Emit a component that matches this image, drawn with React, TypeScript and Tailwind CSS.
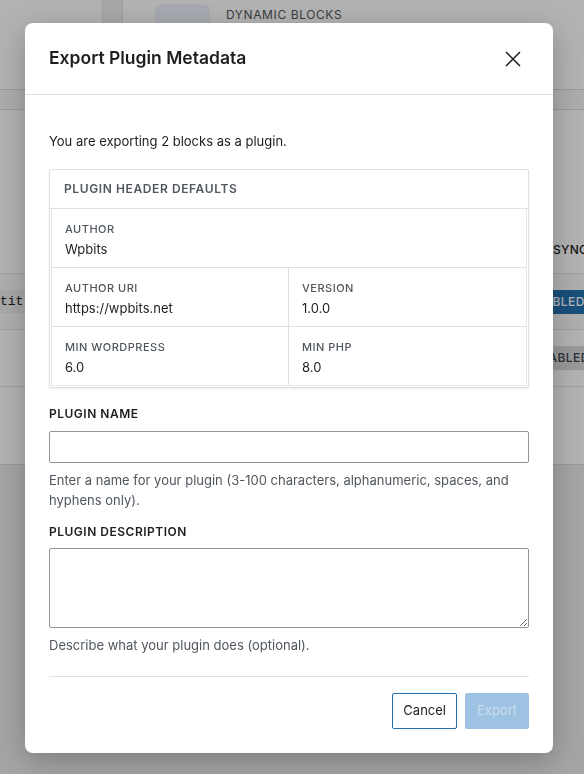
import React from 'react';

const fields = [
  { label: 'Author URI', value: 'https://wpbits.net' },
  { label: 'Version', value: '1.0.0' },
  { label: 'Min WordPress', value: '6.0' },
  { label: 'Min PHP', value: '8.0' },
];

function MetaCell({ label, value, className = '' }: { label: string; value: string; className?: string }) {
  return (
    <div className={`pl-[13px] pr-3.5 pt-3 pb-[8px] ${className}`}>
      <div className="text-[11px] leading-4 font-medium uppercase tracking-[0.5px] text-[#50575e]">{label}</div>
      <div className="mt-0.5 text-[13px] leading-5 text-[#1e1e1e]">{value}</div>
    </div>
  );
}

export default function App() {
  return (
    <div className="relative h-[774px] overflow-hidden bg-white font-['Inter','Noto_Sans',sans-serif]">
      {/* Page behind the modal */}
      <div className="flex h-[89px]">
        <div className="w-[102px]" />
        <div className="w-[21px] bg-[#f0f0f1] border-x border-[#e2e4e7]" />
        <div className="flex flex-1 items-start gap-4 pl-8 pt-[4px]">
          <div className="h-[60px] w-[55px] rounded-lg bg-[#eef2fb]" />
          <div className="pt-[2px] text-[12px] tracking-[0.6px] text-[#50575e]">DYNAMIC BLOCKS</div>
        </div>
      </div>
      <div className="h-[21px] border-y border-[#dcdcde] bg-[#f6f7f7]" />
      <div className="flex h-[163px] items-end justify-end pb-[14px]">
        <div className="w-[31px] overflow-hidden whitespace-nowrap text-[12px] font-medium tracking-[0.3px] text-[#1e1e1e]">SYNC STATUS</div>
      </div>
      <div className="flex h-[57px] items-center justify-between border-y border-[#e2e4e7] bg-[#fafafa]">
        <code className="bg-[#f0f0f1] py-[2px] font-['Liberation_Mono',monospace] text-[13px] text-[#1e1e1e]">title_attr</code>
        <span className="mr-[-9px] rounded-[2px] bg-[#2271b1] px-2 py-[3px] text-[12px] font-medium tracking-[0.5px] text-white">ENABLED</span>
      </div>
      <div className="flex h-[57px] items-center justify-end border-b border-[#e2e4e7]">
        <span className="mr-[-14px] rounded-[2px] bg-[#dcdcde] px-2 py-[3px] text-[12px] font-medium tracking-[0.5px] text-[#3c434a]">DISABLED</span>
      </div>
      <div className="h-[78px] border-b border-[#dcdcde]" />
      <div className="h-full bg-[#ececec]" />

      {/* Overlay + modal */}
      <div className="fixed inset-0 bg-black/30">
        <div className="ml-[25px] mt-[23px] w-[528px] rounded-lg bg-white shadow-[0_8px_30px_rgba(0,0,0,0.25)]">
          <div className="flex h-[72px] items-center justify-between border-b border-[#e0e0e0] px-6">
            <h1 className="text-[17.5px] font-semibold text-[#1e1e1e]">Export Plugin Metadata</h1>
            <button className="mr-2 text-[#1e1e1e]" aria-label="Close">
              <svg width="16" height="16" viewBox="0 0 16 16" fill="none" stroke="currentColor" strokeWidth="1.5">
                <path d="M1 1L15 15M15 1L1 15" />
              </svg>
            </button>
          </div>

          <div className="px-6 pb-6 pt-9">
            <p className="text-[13px] leading-5 text-[#1e1e1e]">You are exporting 2 blocks as a plugin.</p>

            <div className="mt-[18px] rounded-[2px] border border-[#e0e0e0] shadow-[0_1px_2px_rgba(0,0,0,0.08)]">
              <div className="flex h-[39px] items-center border-b border-[#e0e0e0] px-3.5">
                <span className="text-[12px] font-semibold uppercase tracking-[0.6px] text-[#50575e]">Plugin Header Defaults</span>
              </div>
              <div className="mx-px mb-px border-x border-b border-[#e8e8e8]">
                <MetaCell label="Author" value="Wpbits" className="border-b border-[#e0e0e0]" />
                <div className="grid grid-cols-2">
                  {fields.map((f, i) => (
                    <MetaCell
                      key={f.label}
                      label={f.label}
                      value={f.value}
                      className={`${i < 2 ? 'border-b border-[#e0e0e0]' : ''} ${i % 2 === 0 ? 'border-r border-[#e0e0e0]' : ''}`}
                    />
                  ))}
                </div>
              </div>
            </div>

            <label className="mt-[18px] block text-[12px] font-semibold uppercase leading-4 tracking-[0.5px] text-[#1e1e1e]">Plugin Name</label>
            <input type="text" className="mt-[9px] block h-8 w-full rounded-[2px] border border-[#949494] px-2 text-[13px]" />
            <p className="mt-[7px] text-[13px] leading-5 text-[#50575e]">
              Enter a name for your plugin (3-100 characters, alphanumeric, spaces, and hyphens only).
            </p>

            <label className="mt-[14px] block text-[12px] font-semibold uppercase leading-4 tracking-[0.5px] text-[#1e1e1e]">Plugin Description</label>
            <textarea className="mt-2 block h-20 w-full rounded-[2px] border border-[#949494] px-2 text-[13px]" />
            <p className="mt-[7px] text-[13px] leading-5 text-[#50575e]">Describe what your plugin does (optional).</p>

            <div className="mt-[21px] border-t border-[#e0e0e0] pt-4">
              <div className="flex justify-end gap-2">
                <button className="h-9 rounded-[2px] border border-[#2271b1] px-[10px] text-[13px] text-[#1e1e1e]">Cancel</button>
                <button disabled className="h-9 rounded-[2px] bg-[#9ec3e2] px-3 text-[13px] text-[#c9ddef]">Export</button>
              </div>
            </div>
          </div>
        </div>
      </div>
    </div>
  );
}
